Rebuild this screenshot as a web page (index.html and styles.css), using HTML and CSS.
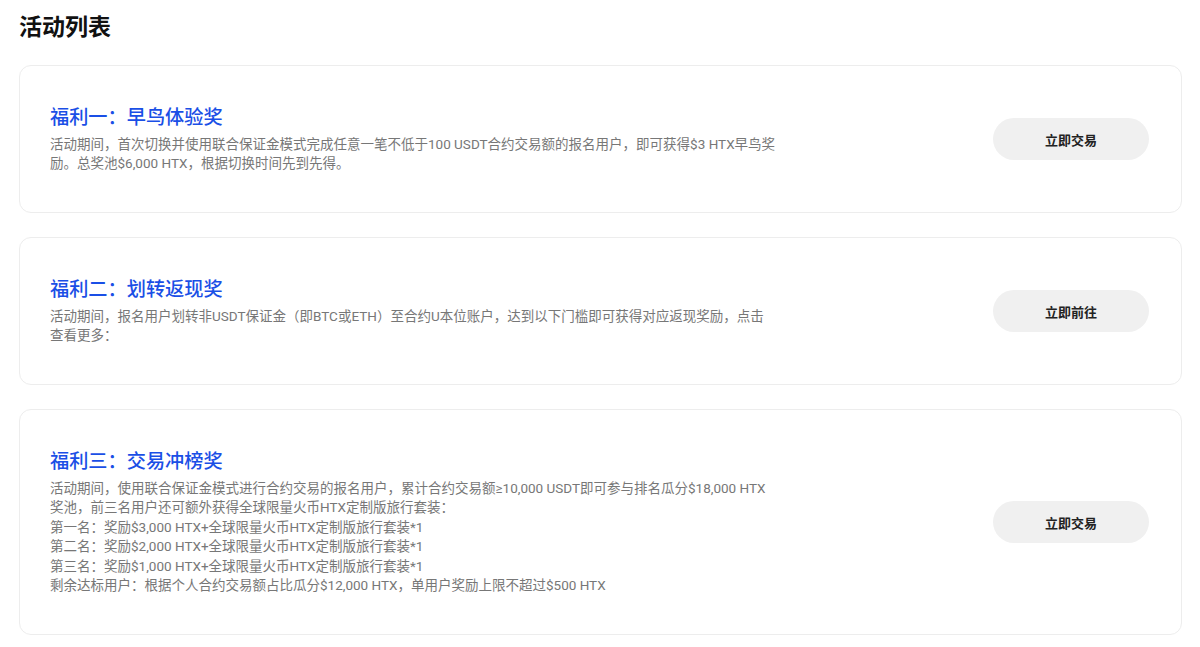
FILE: index.html
```html
<!DOCTYPE html>
<html lang="zh-CN">
<head>
    <meta charset="UTF-8">
    <meta name="viewport" content="width=device-width, initial-scale=1.0">
    <title>活动列表</title>
    <link rel="stylesheet" href="styles.css">
</head>
<body>
    <div class="page">
        <h2 class="page-title">活动列表</h2>

        <div class="activity-list">
            <!-- 福利一 -->
            <div class="activity-card">
                <div class="activity-info">
                    <div class="activity-title">福利一：早鸟体验奖</div>
                    <p class="activity-desc">活动期间，首次切换并使用联合保证金模式完成任意一笔不低于100 USDT合约交易额的报名用户，即可获得$3 HTX早鸟奖励。总奖池$6,000 HTX，根据切换时间先到先得。</p>
                </div>
                <button class="action-btn">立即交易</button>
            </div>

            <!-- 福利二 -->
            <div class="activity-card">
                <div class="activity-info">
                    <div class="activity-title">福利二：划转返现奖</div>
                    <p class="activity-desc">活动期间，报名用户划转非USDT保证金（即BTC或ETH）至合约U本位账户，达到以下门槛即可获得对应返现奖励，点击查看更多：</p>
                </div>
                <button class="action-btn">立即前往</button>
            </div>

            <!-- 福利三 -->
            <div class="activity-card">
                <div class="activity-info">
                    <div class="activity-title">福利三：交易冲榜奖</div>
                    <p class="activity-desc">活动期间，使用联合保证金模式进行合约交易的报名用户，累计合约交易额≥10,000 USDT即可参与排名瓜分$18,000 HTX奖池，前三名用户还可额外获得全球限量火币HTX定制版旅行套装：<br>第一名：奖励$3,000 HTX+全球限量火币HTX定制版旅行套装*1<br>第二名：奖励$2,000 HTX+全球限量火币HTX定制版旅行套装*1<br>第三名：奖励$1,000 HTX+全球限量火币HTX定制版旅行套装*1<br>剩余达标用户：根据个人合约交易额占比瓜分$12,000 HTX，单用户奖励上限不超过$500 HTX</p>
                </div>
                <button class="action-btn">立即交易</button>
            </div>
        </div>
    </div>
</body>
</html>
```

FILE: styles.css
```css
body {
    font-family: 'Roboto', 'Noto Sans CJK SC', sans-serif;
    background-color: #fff;
    color: #111;
    margin: 0;
    padding: 0;
}
.page {
    padding: 13px 18px 0 19px;
}
.page-title {
    font-size: 23px;
    font-weight: 600;
    line-height: 30px;
    margin: 0 0 22px;
}
.activity-list {
    display: flex;
    flex-direction: column;
    gap: 24px;
}
.activity-card {
    display: flex;
    align-items: center;
    justify-content: space-between;
    padding: 38.5px 32px 38.5px 30px;
    border: 1px solid #ededed;
    border-radius: 12px;
}
.activity-info {
    width: 726px;
}
.activity-title {
    font-size: 19.2px;
    line-height: 26px;
    font-weight: 500;
    color: #1a4fe6;
    margin-bottom: 4px;
}
.activity-desc {
    margin: 0;
    font-size: 13.5px;
    line-height: 19.5px;
    color: #777;
}
.action-btn {
    width: 156px;
    height: 42px;
    border: none;
    border-radius: 21px;
    background-color: #f0f0f0;
    color: #222;
    font-family: inherit;
    font-size: 13px;
    font-weight: 600;
    cursor: pointer;
}
```
